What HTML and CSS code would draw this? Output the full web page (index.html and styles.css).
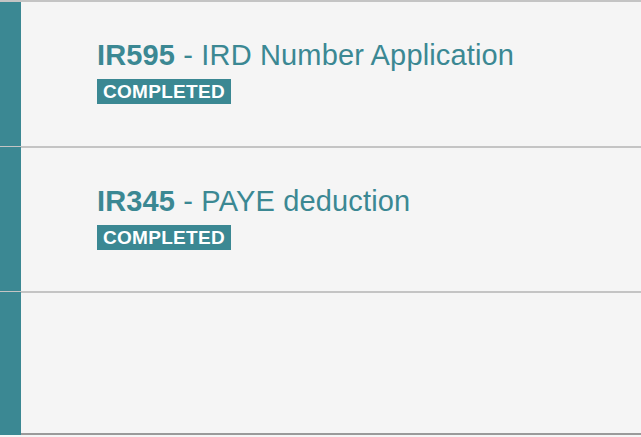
FILE: index.html
```html
<!DOCTYPE html>
<html>
<head>
<meta charset="utf-8">
<link rel="stylesheet" href="styles.css">
</head>
<body>
<div class="list">
  <div class="item">
    <div class="bar"></div>
    <div class="content">
      <div class="title"><strong>IR595</strong> - IRD Number Application</div>
      <span class="badge">COMPLETED</span>
    </div>
  </div>
  <div class="item">
    <div class="bar"></div>
    <div class="content">
      <div class="title"><strong>IR345</strong> - PAYE deduction</div>
      <span class="badge">COMPLETED</span>
    </div>
  </div>
  <div class="item last">
    <div class="bar"></div>
    <div class="content"></div>
  </div>
</div>
</body>
</html>
```
FILE: styles.css
```css
html, body {
  margin: 0;
  padding: 0;
  background: #f5f5f5;
  overflow: hidden;
}
body {
  font-family: "Liberation Sans", Arial, sans-serif;
}
.list {
  border-top: 2px solid #c4c4c4;
}
.item {
  display: flex;
  border-bottom: 1px solid #c4c4c4;
}
.item + .item .content {
  border-top: 1px solid #c4c4c4;
}
.bar {
  width: 21px;
  flex: none;
  background: #3b8893;
}
.content {
  flex: 1;
  height: 144px;
  box-sizing: border-box;
  padding: 35px 0 0 76px;
}
.item.last {
  border-bottom: none;
}
.item.last .content {
  height: 143px;
  border-bottom: 2px solid #9a9a9a;
}
.title {
  color: #3b8893;
  font-size: 29px;
  line-height: 36px;
  letter-spacing: 0.15px;
}
.title strong {
  font-weight: bold;
}
.badge {
  display: inline-block;
  margin-top: 6px;
  background: #3b8893;
  color: #fff;
  font-weight: bold;
  font-size: 19px;
  line-height: 25px;
  letter-spacing: 0.3px;
  padding: 0 6px 0 6px;
}
```
